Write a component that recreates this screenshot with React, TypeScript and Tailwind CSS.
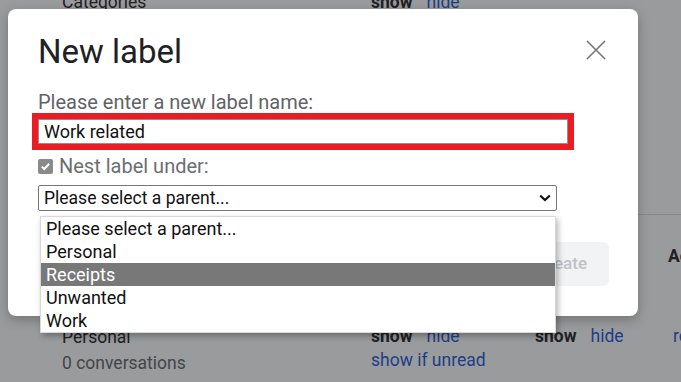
import React from 'react';

const font = { fontFamily: 'Roboto, "Liberation Sans", Arial, sans-serif' };
const options = ['Please select a parent...', 'Personal', 'Receipts', 'Unwanted', 'Work'];

function ShowHide() {
  return (
    <div className="flex gap-[14px]">
      <span className="font-bold">show</span>
      <span className="text-[#1a56d8]">hide</span>
    </div>
  );
}

function Background() {
  return (
    <div className="w-[681px] h-[382px] bg-white text-[17.5px] text-[#202124] overflow-hidden">
      <div className="flex h-[224px] -mt-[10px] leading-[24px]">
        <div className="w-[371px] shrink-0 pl-[62px]">Categories</div>
        <ShowHide />
      </div>
      <div className="ml-[62px] border-t border-[#dadce0] h-[110px] pt-[29px]">
        <div className="pl-[606px] font-bold leading-[24px] whitespace-nowrap">Actions</div>
      </div>
      <div className="flex">
        <div className="w-[371px] shrink-0 pl-[62px] leading-[26px]">
          <div>Personal</div>
          <div className="text-[#5f6368]">0 conversations</div>
        </div>
        <div className="w-[164px] shrink-0 leading-[24px]">
          <ShowHide />
          <div className="text-[#1a56d8]">show if unread</div>
        </div>
        <div className="w-[138px] shrink-0 leading-[24px]">
          <ShowHide />
        </div>
        <div className="shrink-0 leading-[24px] text-[#1a56d8]">remove</div>
      </div>
    </div>
  );
}

function CloseIcon() {
  return (
    <svg width="20" height="20" viewBox="0 0 20 20" fill="none">
      <path d="M1 1L19 19M19 1L1 19" stroke="#757575" strokeWidth="1.6" />
    </svg>
  );
}

function Chevron() {
  return (
    <svg width="12" height="8" viewBox="0 0 12 8" fill="none">
      <path d="M1.2 1.5L6 6L10.8 1.5" stroke="#111" strokeWidth="2.2" />
    </svg>
  );
}

export default function App() {
  return (
    <div className="relative w-[681px] h-[382px] overflow-hidden" style={font}>
      <Background />
      <div className="absolute inset-0 bg-[#202124]/45" />
      <div className="absolute left-[8px] top-[9px] w-[630px] h-[307px] bg-white rounded-[8px] shadow-[0_4px_12px_rgba(0,0,0,0.25)] pl-[30px] pr-[29px] pt-[26px] flex flex-col">
        <div className="flex justify-between items-start h-[34px]">
          <h1 className="text-[33px] leading-[34px] text-[#202124]">New label</h1>
          <button className="mt-[5px] mr-[3px]"><CloseIcon /></button>
        </div>
        <div className="mt-[21px] h-[24px] text-[20px] leading-[24px] text-[#5f6368] whitespace-nowrap">Please enter a new label name:</div>
        <div className="mt-[5px] h-[25px] w-[530px] border border-[#8f8f8f] outline-[6px] outline-[#ed1c24] flex items-center px-[5px] text-[18px] text-[#111]">
          Work related
        </div>
        <div className="mt-[12px] flex items-center gap-[6px] h-[20px]">
          <div className="w-[15px] h-[15px] rounded-[2px] bg-[#8a8a8a] flex items-center justify-center">
            <svg width="11" height="11" viewBox="0 0 11 11" fill="none">
              <path d="M1.8 5.6L4.3 8L9.2 2.8" stroke="#fff" strokeWidth="2" />
            </svg>
          </div>
          <span className="text-[20px] leading-[20px] text-[#6b6e72]">Nest label under:</span>
        </div>
        <div className="mt-[9px] h-[26px] w-[519px] border border-[#767676] rounded-[2px] flex items-center justify-between pl-[5px] pr-[5px] text-[17.5px] text-[#111]">
          <span>Please select a parent...</span>
          <Chevron />
        </div>
        <div className="flex justify-end mt-[31px]">
          <button className="h-[44px] px-[22px] rounded-[6px] bg-[#f1f3f4] text-[#bdc1c6] text-[17px] font-medium">Create</button>
        </div>
      </div>
      <div className="absolute left-[40px] top-[216px] w-[516px] bg-white border border-[#d8d8d8] shadow-[2px_3px_6px_rgba(0,0,0,0.3)] text-[18px] text-[#111]">
        {options.map(o => (
          <div key={o} className={`h-[23px] leading-[23px] pl-[5px] ${o === 'Receipts' ? 'bg-[#787878] text-white' : ''}`}>{o}</div>
        ))}
      </div>
    </div>
  );
}
